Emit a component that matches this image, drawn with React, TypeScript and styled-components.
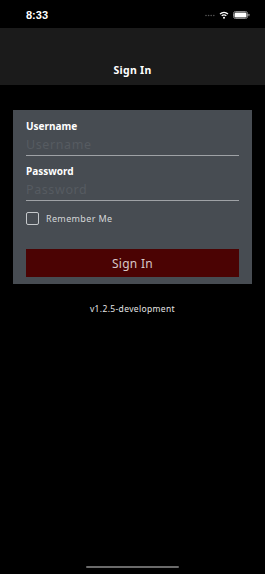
import React from "react"
import styled, { createGlobalStyle } from "styled-components"

const GlobalStyle = createGlobalStyle`
    html, body {
        margin: 0;
        padding: 0;
        background: #000;
    }

    body {
        font-family: "Noto Sans", "Open Sans", sans-serif;
        color: #fff;
    }
`

const Screen = styled.div`
    position: relative;
    display: flex;
    flex-direction: column;
    width: 265px;
    height: 574px;
    background: #000;
    overflow: hidden;
`

const StatusBar = styled.div`
    display: flex;
    align-items: center;
    justify-content: space-between;
    height: 28px;
    padding: 2px 15px 0 26px;
    box-sizing: border-box;
    font-family: "Liberation Sans", sans-serif;
    font-size: 11px;
    font-weight: 600;
`

const StatusIcons = styled.div`
    display: flex;
    align-items: center;
    gap: 4px;
`

const Header = styled.header`
    display: flex;
    align-items: flex-end;
    justify-content: center;
    height: 57px;
    padding-bottom: 8px;
    box-sizing: border-box;
    background: #1b1b1b;
`

const Title = styled.h1`
    margin: 0;
    font-size: 10.5px;
    font-weight: 700;
    letter-spacing: 0.3px;
`

const Card = styled.form`
    display: flex;
    flex-direction: column;
    margin: 25px 13px 0;
    padding: 10px 13px 7px;
    background: #474c52;
`

const Label = styled.label`
    font-size: 10px;
    font-weight: 700;
    line-height: 13px;
`

const Field = styled.div`
    display: flex;
    flex-direction: column;
    margin-bottom: 9px;
`

const Input = styled.input`
    height: 22px;
    padding: 0;
    margin: 0;
    border: none;
    border-bottom: 1px solid #9fa2a6;
    background: transparent;
    font-family: "Noto Sans", sans-serif;
    font-size: 12.5px;
    letter-spacing: 0.6px;
    color: #fff;
    outline: none;

    &::placeholder {
        color: #565b61;
    }
`

const RememberRow = styled.label`
    display: flex;
    align-items: center;
    gap: 7px;
    margin-top: 2px;
    font-size: 9px;
    letter-spacing: 0.35px;
    color: #d4d6d8;
`

const Box = styled.span`
    width: 11px;
    height: 11px;
    border: 1px solid #c5c8cb;
    border-radius: 2px;
`

const Button = styled.button`
    height: 28px;
    margin-top: 24px;
    border: none;
    background: #4b0303;
    color: #d8c8c8;
    font-family: "Noto Sans", sans-serif;
    font-size: 12px;
    letter-spacing: 0.3px;
`

const Version = styled.p`
    margin: 19px 0 0;
    text-align: center;
    font-size: 8.5px;
    letter-spacing: 0.35px;
    color: #e4e4e4;
`

const HomeIndicator = styled.div`
    position: absolute;
    left: 86px;
    bottom: 6px;
    width: 93px;
    height: 2px;
    border-radius: 1px;
    background: #6a6a6a;
`

export default function App() {
    return (
        <>
            <GlobalStyle />
            <Screen>
                <StatusBar>
                    <span>8:33</span>
                    <StatusIcons>
                        <svg width="10" height="3" viewBox="0 0 10 3">
                            {[0, 1, 2, 3].map(i => (
                                <circle key={i} cx={1 + i * 2.6} cy="1.5" r="0.8" fill="#555" />
                            ))}
                        </svg>
                        <svg width="10" height="8" viewBox="0 0 10 8">
                            <path d="M1 3 A6 6 0 0 1 9 3" stroke="#fff" strokeWidth="1.3" fill="none" />
                            <path d="M2.7 4.8 A3.6 3.6 0 0 1 7.3 4.8" stroke="#fff" strokeWidth="1.3" fill="none" />
                            <circle cx="5" cy="6.8" r="1" fill="#fff" />
                        </svg>
                        <svg width="17" height="8" viewBox="0 0 17 8">
                            <rect x="0.5" y="0.5" width="14" height="7" rx="2" stroke="#888" fill="none" />
                            <rect x="1.5" y="1.5" width="12" height="5" rx="1.2" fill="#fff" />
                            <rect x="15.3" y="2.7" width="1.2" height="2.6" rx="0.5" fill="#888" />
                        </svg>
                    </StatusIcons>
                </StatusBar>
                <Header>
                    <Title>Sign In</Title>
                </Header>
                <Card onSubmit={e => e.preventDefault()}>
                    <Field>
                        <Label>Username</Label>
                        <Input placeholder="Username" />
                    </Field>
                    <Field>
                        <Label>Password</Label>
                        <Input type="password" placeholder="Password" />
                    </Field>
                    <RememberRow>
                        <Box />
                        Remember Me
                    </RememberRow>
                    <Button type="submit">Sign In</Button>
                </Card>
                <Version>v1.2.5-development</Version>
                <HomeIndicator />
            </Screen>
        </>
    )
}
